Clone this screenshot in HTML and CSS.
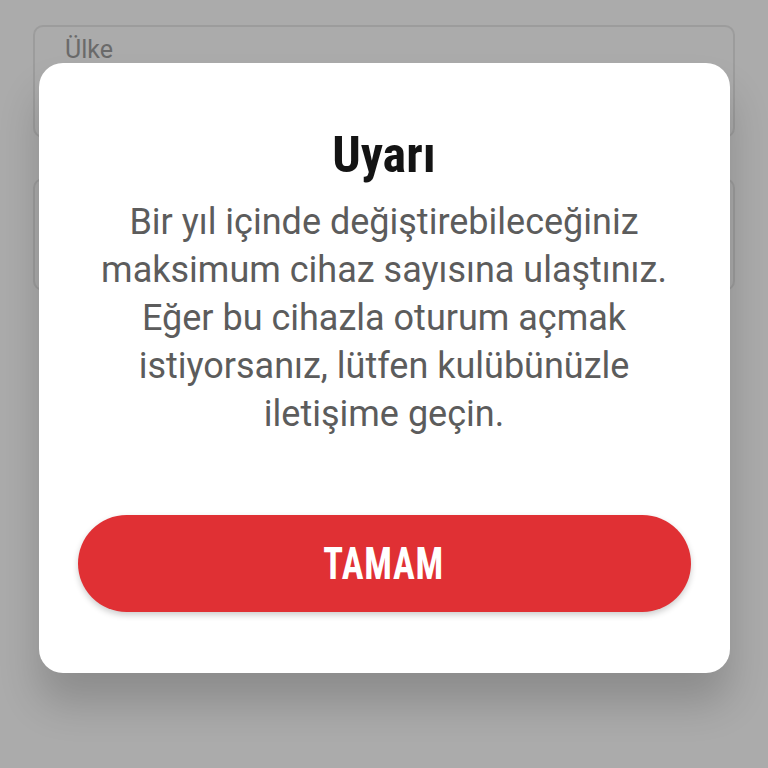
FILE: index.html
```html
<!DOCTYPE html>
<html lang="tr">
<head>
    <meta charset="UTF-8">
    <meta name="viewport" content="width=device-width, initial-scale=1.0">
    <title>Uyarı</title>
    <link rel="stylesheet" href="styles.css">
</head>
<body>
    <!-- arka plandaki form -->
    <div class="form">
        <div class="field">
            <div class="field-label">Ülke</div>
        </div>
        <div class="field"></div>
    </div>

    <div class="overlay">
        <div class="dialog">
            <div class="dialog-title">Uyarı</div>
            <p class="dialog-text">Bir yıl içinde değiştirebileceğiniz maksimum cihaz sayısına ulaştınız. Eğer bu cihazla oturum açmak istiyorsanız, lütfen kulübünüzle iletişime geçin.</p>
            <div class="ok-button"><span>TAMAM</span></div>
        </div>
    </div>
</body>
</html>
```

FILE: styles.css
```css
body {
    margin: 0;
    padding: 0;
    width: 768px;
    height: 768px;
    overflow: hidden;
    background-color: #ababab;
    font-family: Roboto, "Noto Sans", sans-serif;
}

.form {
    padding: 25px 33px;
    display: flex;
    flex-direction: column;
    gap: 40px;
}

.field {
    height: 113px;
    border: 2px solid #9c9c9c;
    border-radius: 10px;
    box-sizing: border-box;
    padding: 8px 30px;
}

.field-label {
    font-size: 25px;
    color: #6a6a6a;
}

.overlay {
    position: absolute;
    top: 0;
    left: 0;
    width: 100%;
    height: 100%;
    display: flex;
    justify-content: center;
    align-items: flex-start;
    padding-top: 63px;
    box-sizing: border-box;
}

.dialog {
    width: 691px;
    height: 610px;
    box-sizing: border-box;
    background: #fff;
    border-radius: 24px;
    box-shadow: 0 30px 40px rgba(0,0,0,0.18);
    padding: 64px 40px 0;
    display: flex;
    flex-direction: column;
    align-items: center;
}

.dialog-title {
    font-family: "Roboto Condensed", "DejaVu Sans Condensed", "DejaVu Sans", sans-serif;
    font-stretch: condensed;
    font-weight: bold;
    font-size: 50px;
    line-height: 56px;
    color: #141414;
}

.dialog-text {
    margin: 15px 0 0;
    font-size: 36px;
    line-height: 48px;
    color: #5c5c5c;
    text-align: center;
}

.ok-button {
    margin-top: 77px;
    width: 613px;
    height: 97px;
    flex-shrink: 0;
    border-radius: 49px;
    background-color: #e03034;
    color: #fff;
    display: flex;
    justify-content: center;
    align-items: center;
    font-family: "Roboto Condensed", "DejaVu Sans Condensed", "DejaVu Sans", sans-serif;
    font-stretch: condensed;
    font-weight: bold;
    font-size: 45px;
    letter-spacing: 1px;
    box-shadow: 0 3px 6px rgba(0,0,0,0.2);
}

    .ok-button span {
        display: inline-block;
        transform: scaleX(0.81);
    }
```
